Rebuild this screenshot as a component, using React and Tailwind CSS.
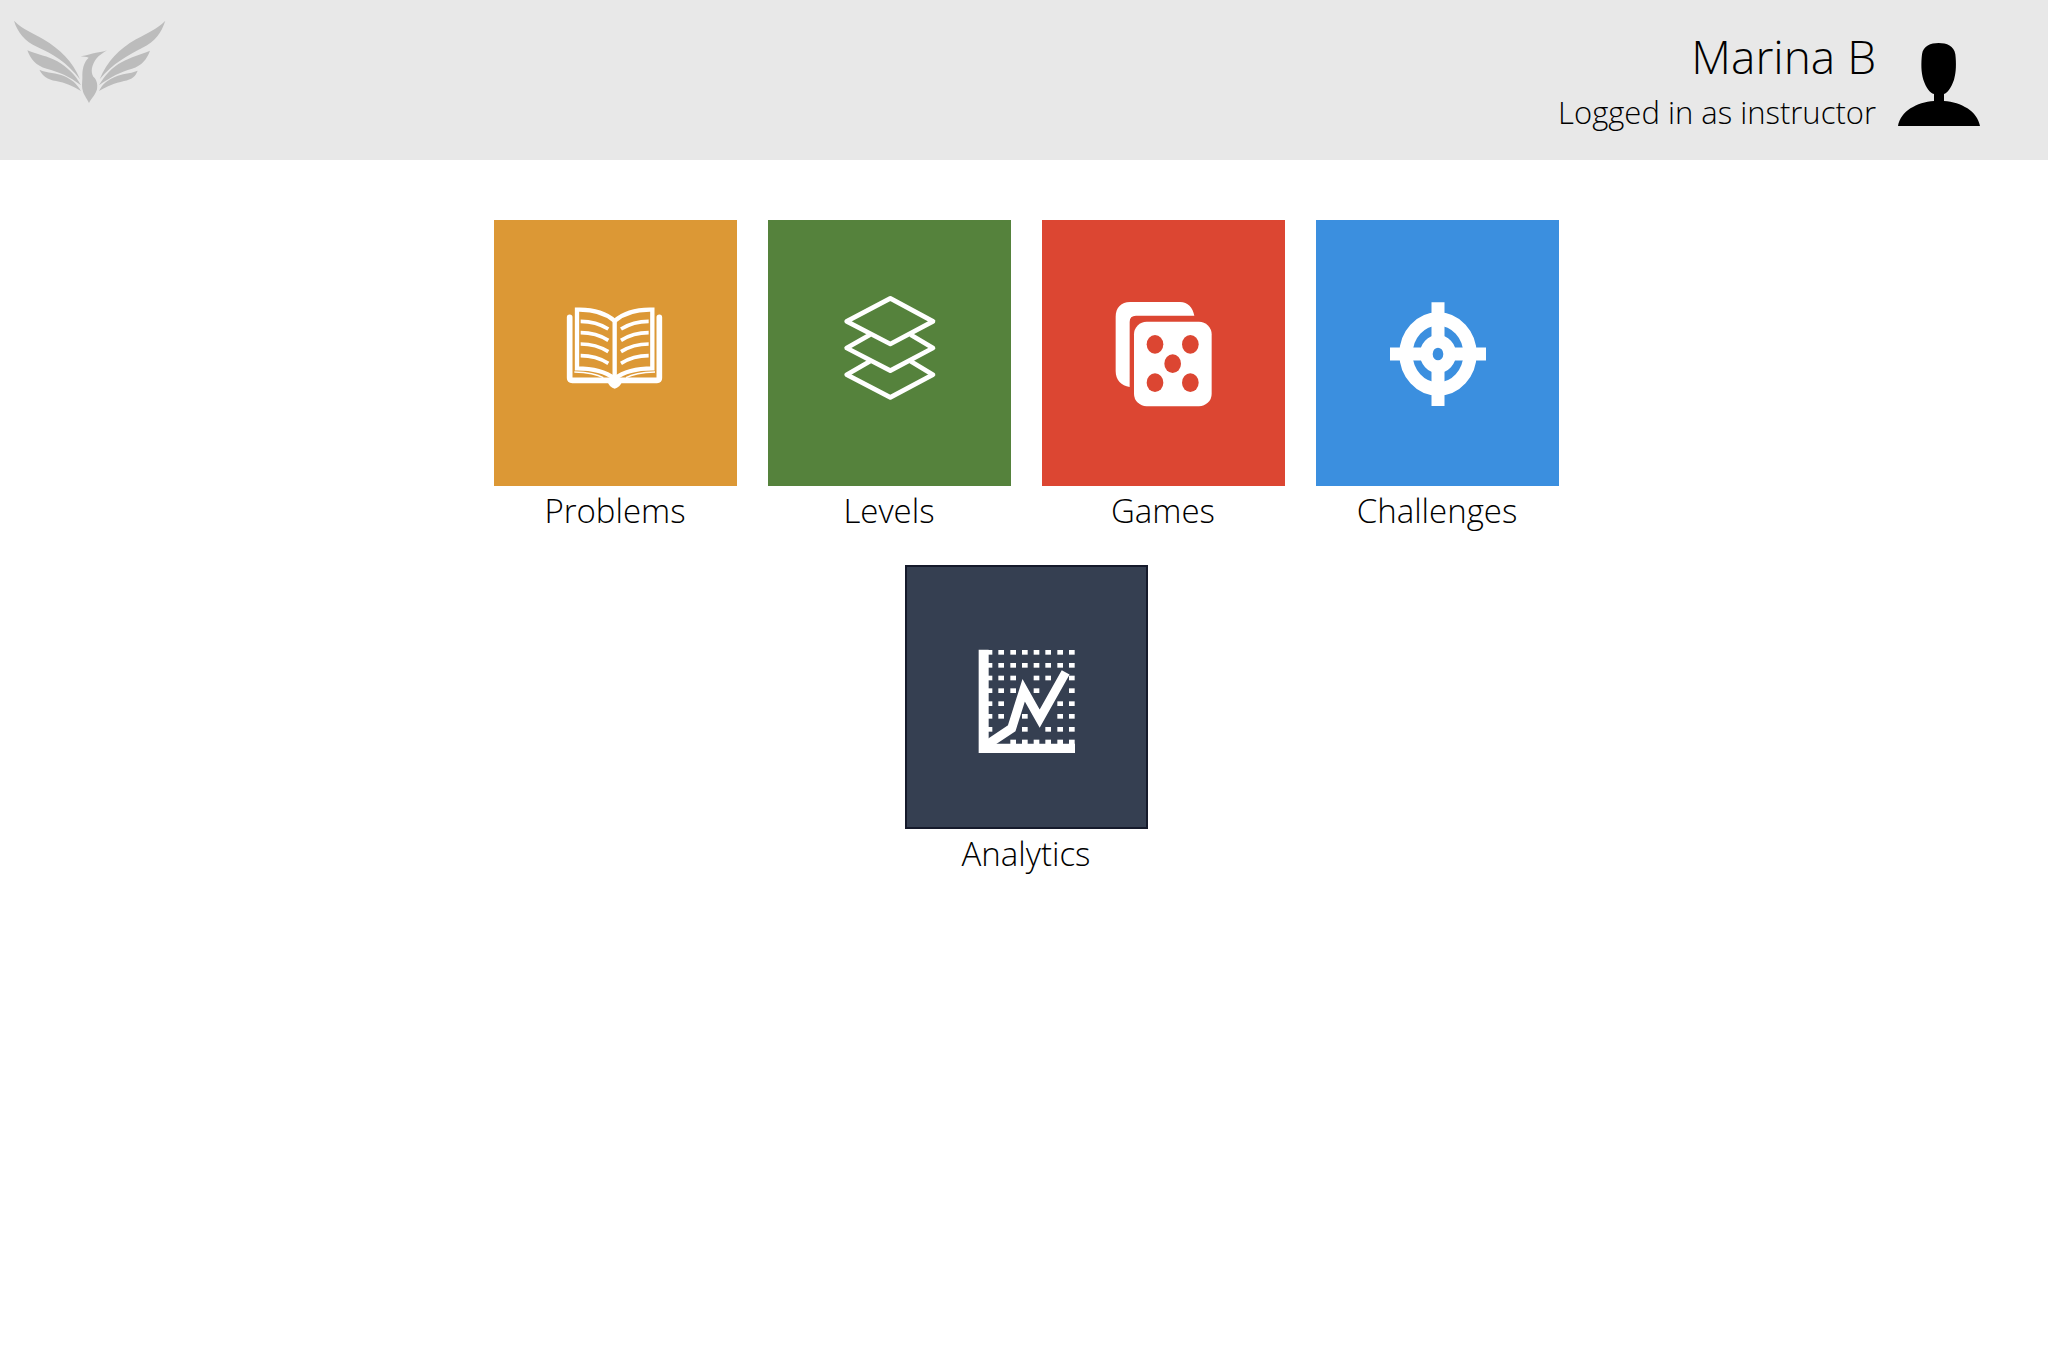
function PhoenixLogo() {
  return (
    <svg viewBox="0 0 540 360" className="h-[120px] w-[180px]" fill="#bcbcbc" aria-hidden="true">
      <path d="M42 62C70 90 98 98 130 118C180 148 218 184 240 238C200 186 158 162 112 141C74 124 52 96 42 62Z" />
      <path d="M82 151C112 164 144 168 172 184C202 202 226 224 243 256C208 228 176 216 140 206C108 198 92 178 82 151Z" />
      <path d="M118 209C142 220 170 218 192 228C214 238 230 250 243 273C218 258 196 248 168 243C142 238 128 228 118 209Z" />
      <path d="M496 62C468 90 446 96 408 118C356 148 322 184 299 238C338 190 384 166 426 144C466 124 484 98 496 62Z" />
      <path d="M450 152C420 164 394 170 366 186C336 202 314 226 297 256C332 230 362 216 396 206C426 196 440 178 450 152Z" />
      <path d="M413 212C388 222 366 220 346 230C324 240 308 250 297 273C322 258 344 250 372 243C396 238 406 230 413 212Z" />
      <path d="M242 169C262 165 274 161 288 158C300 157 310 155 321 151C308 159 298 166 290 175C274 196 272 216 280 230C292 240 293 256 291 268C286 286 276 292 267 309C260 294 250 284 248 270C244 254 248 242 247 224C248 200 254 184 266 173C258 170 250 171 242 169Z" />
    </svg>
  );
}

function Avatar() {
  return (
    <svg viewBox="0 0 246 249" className="mt-2 h-[83px] w-[82px]" fill="#000" aria-hidden="true">
      <path d="M122 0C146 0 168 8 172 34C175 60 175 88 168 110C160 134 148 150 138 153V174C190 178 238 204 246 249H0C8 204 56 178 108 174V153C96 150 84 134 76 110C69 88 69 60 72 34C76 8 98 0 122 0Z" />
    </svg>
  );
}

function BookIcon() {
  return (
    <svg viewBox="227 263 360 360" className="size-[120px]" fill="none" stroke="#fff" strokeLinejoin="miter" aria-hidden="true">
      <path d="M406 343V515" strokeWidth="13" />
      <path d="M406 347Q366 311 293 313V489Q366 489 406 520Q446 489 519 489V313Q446 311 406 347Z" strokeWidth="13" />
      <path d="M271 336V518Q271 525 279 525H533Q540 525 540 518V336" strokeWidth="17" strokeLinecap="round" />
      <path d="M285 500Q345 502 372 517M527 500Q467 502 440 517" strokeWidth="4" />
      <path d="M304 348Q350 348 387 371M304 382Q350 382 387 405M304 416Q350 416 387 439M304 451Q350 451 387 474" strokeWidth="11" />
      <path d="M508 348Q462 348 425 371M508 382Q462 382 425 405M508 416Q462 416 425 439M508 451Q462 451 425 474" strokeWidth="11" />
      <path d="M384 528Q391 548 406 550Q421 548 429 528L406 512Z" fill="#fff" stroke="none" />
    </svg>
  );
}

function LayersIcon() {
  return (
    <svg viewBox="208 263 360 360" className="size-[120px]" fill="none" stroke="#fff" strokeWidth="14" strokeLinejoin="round" aria-hidden="true">
      <path d="M392 279L520 348L392 416L261 348Z" />
      <path d="M331 388L261 428L392 496L520 428L453 388" />
      <path d="M331 468L261 508L392 576L520 508L453 468" />
    </svg>
  );
}

function DiceIcon() {
  return (
    <svg viewBox="219 263 360 360" className="size-[120px]" aria-hidden="true">
      <path d="M299 545C274 542 257 524 257 498V334C257 307 274 290 300 290H450C474 290 488 306 493 331H318Q299 331 299 350Z" fill="#fff" />
      <rect x="312" y="349" width="233" height="254" rx="38" fill="#fff" />
      <g fill="#dc4632">
        <ellipse cx="375" cy="417" rx="25" ry="28" />
        <ellipse cx="481" cy="417" rx="25" ry="28" />
        <ellipse cx="428" cy="475" rx="25" ry="28" />
        <ellipse cx="375" cy="532" rx="25" ry="28" />
        <ellipse cx="481" cy="532" rx="25" ry="28" />
      </g>
    </svg>
  );
}

function TargetIcon() {
  return (
    <svg viewBox="233 263 360 360" className="size-[120px]" fill="none" stroke="#fff" aria-hidden="true">
      <ellipse cx="416" cy="446" rx="96" ry="105" strokeWidth="40" />
      <ellipse cx="416" cy="446" rx="35" ry="38" strokeWidth="38" />
      <path d="M416 291V410M416 482V602M272 446H382M450 446H560" strokeWidth="39" />
    </svg>
  );
}

const chartDots = [
  [306, [334, 370, 405, 440, 475, 511, 546]],
  [345, [334, 370, 405, 440, 475, 511, 546]],
  [383, [334, 370, 440, 475, 546]],
  [421, [334, 370, 440, 546]],
  [460, [334, 511, 546]],
  [498, [334, 405, 511, 546]],
  [537, [405, 475, 511, 546]],
  [575, [370, 405, 440, 475, 511, 546]],
];

function ChartIcon() {
  return (
    <svg viewBox="229 260 360 360" className="size-[120px]" fill="#fff" aria-hidden="true">
      <path d="M267 298H297V580H556V608H267Z" />
      {chartDots.map(([y, xs]) => (
        <g key={y}>
          <rect x="290" y={y - 7} width="18" height="14" />
          {xs.map((x) => (
            <rect key={x} x={x - 8} y={y - 7} width="17" height="14" />
          ))}
        </g>
      ))}
      <path d="M292 583L366 534L402 420L450 505L528 366" fill="none" stroke="#fff" strokeWidth="27" />
    </svg>
  );
}

const tiles = [
  { label: "Problems", Icon: BookIcon, box: "h-[266px] bg-[#dc9835]" },
  { label: "Levels", Icon: LayersIcon, box: "h-[266px] bg-[#55823c]" },
  { label: "Games", Icon: DiceIcon, box: "h-[266px] bg-[#dc4632]" },
  { label: "Challenges", Icon: TargetIcon, box: "h-[266px] bg-[#3b8fdf]" },
  { label: "Analytics", Icon: ChartIcon, box: "h-[264px] border-2 border-[#151a2b] bg-[#353f51]" },
];

export default function App() {
  return (
    <div className="min-h-screen bg-white font-['Open_Sans','Noto_Sans',sans-serif] font-light text-black">
      <header className="flex items-start justify-between bg-[#e8e8e8]">
        <a href="#home" aria-label="Home">
          <PhoenixLogo />
        </a>
        <div className="flex items-center gap-[22px] pt-6 pr-[68px] pb-6">
          <div className="text-right">
            <h1 className="text-[46px] leading-[64px]">Marina B</h1>
            <p className="text-[31px] leading-[48px]">Logged in as instructor</p>
          </div>
          <Avatar />
        </div>
      </header>
      <main className="pt-[60px] pl-1">
        <nav className="mx-auto flex max-w-[1100px] flex-wrap justify-center gap-x-[31px] gap-y-[29px]">
          {tiles.map(({ label, Icon, box }) => (
            <a key={label} href={`#${label.toLowerCase()}`} className="flex w-[243px] flex-col text-center">
              <span className={`flex items-center justify-center ${box}`}>
                <Icon />
              </span>
              <span className="text-[33px] leading-[50px]">{label}</span>
            </a>
          ))}
        </nav>
      </main>
    </div>
  );
}
